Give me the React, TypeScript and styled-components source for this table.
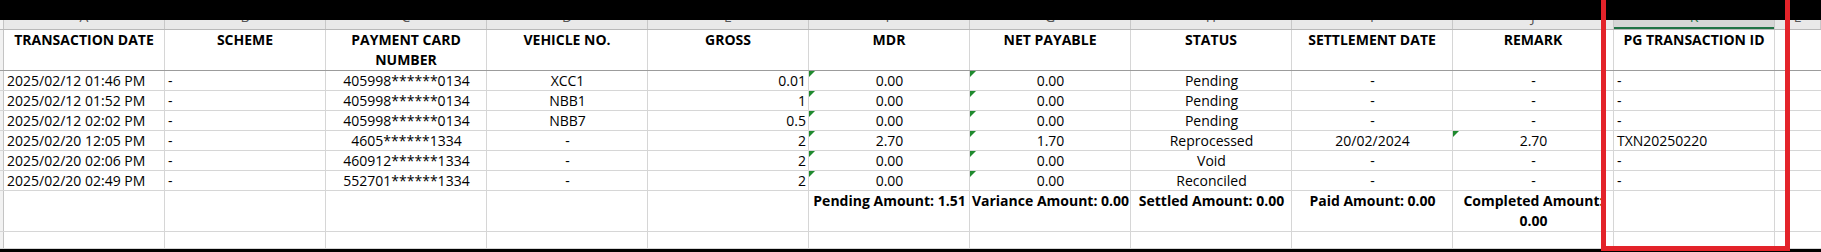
import React from 'react';
import styled, { createGlobalStyle, css } from 'styled-components';

const GlobalStyle = createGlobalStyle`
    html, body {
        margin: 0;
        padding: 0;
        background: #ffffff;
    }
    body {
        font-family: "Open Sans", "Liberation Sans", sans-serif;
        color: #000;
    }
`;

const GRID = `4px repeat(11, 161px) 1fr`;

const Page = styled.main`
    position: relative;
    width: 1821px;
    height: 252px;
    overflow: hidden;
    display: flex;
    flex-direction: column;
`;

const BlackBar = styled.div<{ $h: number }>`
    height: ${p => p.$h}px;
    background: #000;
    flex-shrink: 0;
`;

const Row = styled.div<{ $h: number; $strong?: boolean }>`
    display: grid;
    grid-template-columns: ${GRID};
    height: ${p => p.$h}px;
    flex-shrink: 0;
    box-sizing: border-box;
    border-bottom: 1px solid ${p => (p.$strong ? '#9c9c9c' : '#d6d6d6')};
`;

const LetterRow = styled(Row)`
    background: #e9e9e9;
    border-bottom: 1px solid #b8b8b8;
`;

const RowHead = styled.div`
    background: #f2f2f2;
    border-right: 1px solid #c4c4c4;
`;

const Letter = styled.div<{ $active?: boolean }>`
    position: relative;
    display: flex;
    justify-content: center;
    overflow: hidden;
    border-right: 1px solid #c8c8c8;
    color: #555;
    font-size: 14px;
    line-height: 14px;
    span {
        margin-top: -10px;
    }
    ${p =>
        p.$active &&
        css`
            background: #d6d6d6;
            color: #217346;
            box-shadow: inset 0 -2px 0 #217346;
        `}
`;

const HeadCell = styled.div`
    border-right: 1px solid #d6d6d6;
    font-size: 14px;
    font-weight: 700;
    line-height: 20px;
    text-align: center;
    padding: 0 4px;
    overflow: hidden;
`;

const Cell = styled.div<{ $align: 'left' | 'center' | 'right'; $flag?: boolean; $bold?: boolean; $wrap?: boolean }>`
    position: relative;
    display: flex;
    align-items: flex-start;
    justify-content: ${p => (p.$align === 'left' ? 'flex-start' : p.$align === 'right' ? 'flex-end' : 'center')};
    border-right: 1px solid #d6d6d6;
    padding: 0 2px 0 3px;
    font-size: 14px;
    line-height: ${p => (p.$bold ? '20px' : '19px')};
    font-weight: ${p => (p.$bold ? 700 : 400)};
    white-space: ${p => (p.$wrap ? 'normal' : 'nowrap')};
    text-align: center;
    ${p =>
        p.$flag &&
        css`
            &::before {
                content: '';
                position: absolute;
                left: 0;
                top: 0;
                border-top: 6px solid #1f8a2e;
                border-right: 6px solid transparent;
            }
        `}
`;

const Filler = styled.div``;

const Highlight = styled.div`
    position: absolute;
    left: 1601px;
    top: -10px;
    width: 189px;
    height: 261px;
    box-sizing: border-box;
    border: 5px solid #e3232a;
    pointer-events: none;
`;

type Align = 'left' | 'center' | 'right';

const COLUMNS: { key: string; title: string; align: Align }[] = [
    { key: 'date', title: 'TRANSACTION DATE', align: 'left' },
    { key: 'scheme', title: 'SCHEME', align: 'left' },
    { key: 'card', title: 'PAYMENT CARD NUMBER', align: 'center' },
    { key: 'vehicle', title: 'VEHICLE NO.', align: 'center' },
    { key: 'gross', title: 'GROSS', align: 'right' },
    { key: 'mdr', title: 'MDR', align: 'center' },
    { key: 'net', title: 'NET PAYABLE', align: 'center' },
    { key: 'status', title: 'STATUS', align: 'center' },
    { key: 'settle', title: 'SETTLEMENT DATE', align: 'center' },
    { key: 'remark', title: 'REMARK', align: 'center' },
    { key: 'pg', title: 'PG TRANSACTION ID', align: 'left' },
];

const LETTERS = ['A', 'B', 'C', 'D', 'E', 'F', 'G', 'H', 'I', 'J', 'K', 'L'];

type Txn = Record<string, string> & { flags?: string[] };

const ROWS: Txn[] = [
    { date: '2025/02/12 01:46 PM', scheme: '-', card: '405998******0134', vehicle: 'XCC1', gross: '0.01', mdr: '0.00', net: '0.00', status: 'Pending', settle: '-', remark: '-', pg: '-' },
    { date: '2025/02/12 01:52 PM', scheme: '-', card: '405998******0134', vehicle: 'NBB1', gross: '1', mdr: '0.00', net: '0.00', status: 'Pending', settle: '-', remark: '-', pg: '-' },
    { date: '2025/02/12 02:02 PM', scheme: '-', card: '405998******0134', vehicle: 'NBB7', gross: '0.5', mdr: '0.00', net: '0.00', status: 'Pending', settle: '-', remark: '-', pg: '-' },
    { date: '2025/02/20 12:05 PM', scheme: '-', card: '4605******1334', vehicle: '-', gross: '2', mdr: '2.70', net: '1.70', status: 'Reprocessed', settle: '20/02/2024', remark: '2.70', pg: 'TXN20250220', flags: ['remark'] },
    { date: '2025/02/20 02:06 PM', scheme: '-', card: '460912******1334', vehicle: '-', gross: '2', mdr: '0.00', net: '0.00', status: 'Void', settle: '-', remark: '-', pg: '-' },
    { date: '2025/02/20 02:49 PM', scheme: '-', card: '552701******1334', vehicle: '-', gross: '2', mdr: '0.00', net: '0.00', status: 'Reconciled', settle: '-', remark: '-', pg: '-' },
];

const TOTALS: Record<string, string> = {
    mdr: 'Pending Amount: 1.51',
    net: 'Variance Amount: 0.00',
    status: 'Settled Amount: 0.00',
    settle: 'Paid Amount: 0.00',
    remark: 'Completed Amount: 0.00',
};

const App = () => {
    return (
        <Page>
            <GlobalStyle />
            <BlackBar $h={20} />
            <LetterRow $h={10}>
                <RowHead />
                {LETTERS.map(l => (
                    <Letter key={l} $active={l === 'K'}>
                        <span>{l}</span>
                    </Letter>
                ))}
            </LetterRow>
            <Row $h={41} $strong>
                <RowHead />
                {COLUMNS.map(col => (
                    <HeadCell key={col.key}>{col.title}</HeadCell>
                ))}
                <Filler />
            </Row>
            {ROWS.map((row, i) => (
                <Row key={i} $h={20}>
                    <RowHead />
                    {COLUMNS.map(col => (
                        <Cell
                            key={col.key}
                            $align={col.align}
                            $flag={col.key === 'mdr' || col.key === 'net' || (row.flags || []).includes(col.key)}
                        >
                            {row[col.key]}
                        </Cell>
                    ))}
                    <Filler />
                </Row>
            ))}
            <Row $h={41}>
                <RowHead />
                {COLUMNS.map(col => (
                    <Cell key={col.key} $align="center" $bold $wrap={col.key === 'remark'}>
                        {TOTALS[col.key] || ''}
                    </Cell>
                ))}
                <Filler />
            </Row>
            <Row $h={17}>
                <RowHead />
                {COLUMNS.map(col => (
                    <Cell key={col.key} $align="left" />
                ))}
                <Filler />
            </Row>
            <BlackBar $h={3} />
            <Highlight />
        </Page>
    );
};

export default App;
